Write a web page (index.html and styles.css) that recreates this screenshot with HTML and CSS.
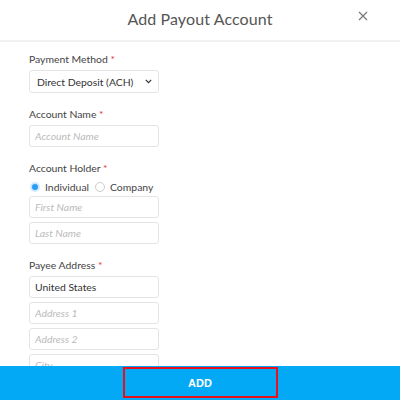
FILE: index.html
```html
<!DOCTYPE html>
<html lang="en">

<head>
    <meta charset="UTF-8">
    <meta name="viewport" content="width=device-width, initial-scale=1.0">
    <title>Add Payout Account</title>
    <link rel="stylesheet" href="styles.css">
</head>

<body>
    <div class="modal">
        <div class="modal-header">
            <h1>Add Payout Account</h1>
            <button class="close-btn" aria-label="Close">
                <svg width="10" height="10" viewBox="0 0 10 10">
                    <path d="M1 1 L9 9 M9 1 L1 9" stroke="#777" stroke-width="1.2" fill="none" />
                </svg>
            </button>
        </div>

        <form class="modal-body">
            <div class="form-group">
                <label class="field-label">Payment Method <span class="req">*</span></label>
                <div class="select-wrap">
                    <select class="field select">
                        <option>Direct Deposit (ACH)</option>
                    </select>
                    <svg class="chevron" width="7" height="5" viewBox="0 0 7 5">
                        <path d="M0.8 0.8 L3.5 3.6 L6.2 0.8" stroke="#333" stroke-width="1.2" fill="none" />
                    </svg>
                </div>
            </div>

            <div class="form-group">
                <label class="field-label">Account Name <span class="req">*</span></label>
                <input class="field" type="text" placeholder="Account Name">
            </div>

            <div class="form-group">
                <label class="field-label">Account Holder <span class="req">*</span></label>
                <div class="radio-row">
                    <label class="radio"><span class="dot checked"></span>Individual</label>
                    <label class="radio"><span class="dot"></span>Company</label>
                </div>
                <div class="stack">
                    <input class="field" type="text" placeholder="First Name">
                    <input class="field" type="text" placeholder="Last Name">
                </div>
            </div>

            <div class="form-group">
                <label class="field-label">Payee Address <span class="req">*</span></label>
                <div class="stack">
                    <input class="field" type="text" value="United States">
                    <input class="field" type="text" placeholder="Address 1">
                    <input class="field" type="text" placeholder="Address 2">
                    <input class="field" type="text" placeholder="City">
                </div>
            </div>
        </form>

        <div class="modal-footer">
            <button class="add-btn">ADD</button>
        </div>
    </div>
</body>

</html>
```

FILE: styles.css
```css
* {
    margin: 0;
    padding: 0;
    box-sizing: border-box;
    font-family: Lato, 'Open Sans', sans-serif;
}

body {
    background: #fff;
}

.modal {
    width: 400px;
    height: 400px;
    display: flex;
    flex-direction: column;
    overflow: hidden;
}

.modal-header {
    height: 42px;
    flex-shrink: 0;
    border-bottom: 2px solid #f2f2f2;
    display: flex;
    align-items: center;
    justify-content: center;
    position: relative;
}

.modal-header h1 {
    font-size: 16px;
    font-weight: 400;
    color: #555;
    margin-top: -3px;
    letter-spacing: 0.1px;
}

.close-btn {
    position: absolute;
    right: 32px;
    top: 11px;
    width: 10px;
    height: 10px;
    border: none;
    background: none;
    display: flex;
}

.modal-body {
    flex: 1;
    overflow: hidden;
    padding: 10px 0 0 29px;
}

.form-group {
    margin-bottom: 14px;
    width: 130px;
}

.field-label {
    display: block;
    font-size: 10.4px;
    line-height: 14px;
    color: #444;
    margin-bottom: 4px;
    white-space: nowrap;
}

.req {
    color: #e53935;
}

.field {
    display: block;
    width: 130px;
    height: 22px;
    border: 1px solid #e4e4e4;
    border-radius: 3px;
    padding: 0 5px;
    font-size: 10.4px;
    color: #333;
    background: #fff;
}

.field::placeholder {
    color: #bbb;
    font-style: italic;
}

.select-wrap {
    position: relative;
    width: 130px;
}

.select {
    height: 23px;
    padding: 0 7px;
    appearance: none;
    -webkit-appearance: none;
    outline: none;
}

.chevron {
    position: absolute;
    right: 7px;
    top: 9px;
    pointer-events: none;
}

.stack {
    display: flex;
    flex-direction: column;
    gap: 4px;
}

.radio-row {
    display: flex;
    align-items: center;
    gap: 6px;
    margin: 6px 0 3px 1px;
    height: 12px;
}

.radio {
    display: flex;
    align-items: center;
    gap: 5px;
    font-size: 10.4px;
    color: #444;
    white-space: nowrap;
}

.dot {
    width: 10px;
    height: 10px;
    border-radius: 50%;
    border: 1px solid #ccc;
    background: #fff;
}

.dot.checked {
    background: #2b9bf4;
    border: 2px solid #cfe8fd;
}

.modal-footer {
    height: 34px;
    flex-shrink: 0;
    background: #03a9f4;
    display: flex;
    justify-content: center;
    align-items: flex-start;
    padding-top: 1px;
}

.add-btn {
    width: 155px;
    height: 31px;
    background: #03a9f4;
    border: 2px solid #e8101a;
    color: #fff;
    font-family: 'Liberation Sans', Arial, sans-serif;
    font-weight: 700;
    font-size: 11px;
}
```
